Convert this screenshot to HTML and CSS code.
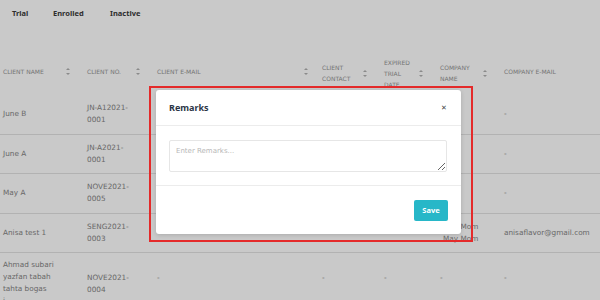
FILE: index.html
```html
<!DOCTYPE html>
<html>
<head>
<meta charset="utf-8">
<link rel="stylesheet" href="styles.css">
</head>
<body>
<div class="page">
  <nav class="tabs">
    <span class="tab">Trial</span>
    <span class="tab">Enrolled</span>
    <span class="tab">Inactive</span>
  </nav>
  <div class="table">
    <div class="row head">
      <div class="cell"><span>CLIENT NAME</span><i class="sort"></i></div>
      <div class="cell"><span>CLIENT NO.</span><i class="sort"></i></div>
      <div class="cell wide"><span>CLIENT E-MAIL</span><i class="sort"></i></div>
      <div class="cell"><span>CLIENT<br>CONTACT</span><i class="sort"></i></div>
      <div class="cell"><span>EXPIRED<br>TRIAL<br>DATE</span><i class="sort"></i></div>
      <div class="cell"><span>COMPANY<br>NAME</span><i class="sort"></i></div>
      <div class="cell"><span>COMPANY E-MAIL</span></div>
    </div>
    <div class="row">
      <div class="cell">June B</div>
      <div class="cell">JN-A12021-<br>0001</div>
      <div class="cell"></div><div class="cell"></div><div class="cell"></div><div class="cell"></div>
      <div class="cell">-</div>
    </div>
    <div class="row">
      <div class="cell">June A</div>
      <div class="cell">JN-A2021-<br>0001</div>
      <div class="cell"></div><div class="cell"></div><div class="cell"></div><div class="cell"></div>
      <div class="cell">-</div>
    </div>
    <div class="row">
      <div class="cell">May A</div>
      <div class="cell">NOVE2021-<br>0005</div>
      <div class="cell"></div><div class="cell"></div><div class="cell"></div><div class="cell"></div>
      <div class="cell">-</div>
    </div>
    <div class="row">
      <div class="cell">Anisa test 1</div>
      <div class="cell">SENG2021-<br>0003</div>
      <div class="cell"></div><div class="cell"></div><div class="cell"></div>
      <div class="cell shift">May Mom<br>May Mom</div>
      <div class="cell">anisaflavor@gmail.com</div>
    </div>
    <div class="row tall">
      <div class="cell">Ahmad subari<br>yazfan tabah<br>tahta bogas<br>i</div>
      <div class="cell mid">NOVE2021-<br>0004</div>
      <div class="cell mid">-</div><div class="cell mid">-</div><div class="cell mid">-</div><div class="cell mid">-</div>
      <div class="cell mid">-</div>
    </div>
  </div>
  <div class="overlay"></div>
  <div class="highlight"></div>
  <div class="modal">
    <div class="modal-head">
      <span class="modal-title">Remarks</span>
      <span class="close">&#x2715;</span>
    </div>
    <div class="modal-body">
      <textarea class="remarks" placeholder="Enter Remarks..."></textarea>
    </div>
    <div class="modal-foot">
      <button class="save">Save</button>
    </div>
  </div>
</div>
</body>
</html>
```

FILE: styles.css
```css
* { box-sizing: border-box; }
html, body { margin: 0; padding: 0; }
body {
  width: 600px;
  height: 300px;
  overflow: hidden;
  background: #fff;
  font-family: "Noto Sans", "Open Sans", sans-serif;
}
.page { position: relative; width: 600px; height: 300px; overflow: hidden; }
.tabs {
  display: flex;
  padding: 7px 0 0 12px;
  height: 51px;
}
.tab {
  font-size: 7.5px;
  font-weight: 700;
  color: #3a3a3a;
  line-height: 12px;
}
.tab:nth-child(1) { width: 41px; }
.tab:nth-child(2) { width: 57px; }
.table {
  display: flex;
  flex-direction: column;
  font-family: "DejaVu Sans", "Noto Sans", sans-serif;
}
.row {
  display: grid;
  grid-template-columns: 84px 70px 165px 62px 56px 64px 1fr;
  align-items: center;
  height: 39.5px;
  border-bottom: 1px solid #e2e2e2;
  font-size: 7.3px;
  line-height: 12px;
  color: #858585;
}
.row.head {
  height: 44px;
  border-bottom: none;
  font-size: 6px;
  line-height: 11px;
  color: #959595;
}
.row.head .cell:nth-child(1),
.row.head .cell:nth-child(2),
.row.head .cell:nth-child(3),
.row.head .cell:nth-child(7) { padding-bottom: 4px; }
.row.tall { height: 60px; align-items: start; }
.cell {
  padding-left: 3px;
  display: flex;
  align-items: center;
  justify-content: space-between;
  padding-right: 14px;
  white-space: nowrap;
}
.cell.wide { padding-right: 11px; }
.cell.shift { padding-left: 6px; }
.row.tall .cell { padding-top: 6px; }
.row.tall .cell.mid { padding-top: 19px; }
.sort {
  width: 4px;
  height: 7px;
  position: relative;
  display: inline-block;
}
.sort::before, .sort::after {
  content: "";
  position: absolute;
  left: 0;
  border-left: 2px solid transparent;
  border-right: 2px solid transparent;
}
.sort::before { top: 0; border-bottom: 2.5px solid #b0b0b0; }
.sort::after { bottom: 0; border-top: 2.5px solid #b0b0b0; }
.overlay {
  position: absolute;
  inset: 0;
  background: rgba(0, 0, 0, 0.21);
}
.highlight {
  position: absolute;
  left: 149px;
  top: 86px;
  width: 324px;
  height: 156px;
  border: 2px solid #e42a2a;
}
.modal {
  position: absolute;
  left: 156px;
  top: 90px;
  width: 305px;
  height: 144px;
  background: #fff;
  border-radius: 3px;
  box-shadow: 0 1px 4px rgba(0,0,0,0.15);
  display: flex;
  flex-direction: column;
}
.modal-head {
  height: 36px;
  display: flex;
  align-items: center;
  justify-content: space-between;
  padding: 0 14px 0 13px;
  border-bottom: 1px solid #ececec;
}
.modal-title {
  font-size: 9px;
  font-weight: 700;
  color: #2c3646;
}
.close { font-size: 7px; color: #444; }
.modal-body {
  padding: 14px 14px 13px 13px;
  border-bottom: 1px solid #ececec;
}
.remarks {
  display: block;
  width: 100%;
  height: 32px;
  border: 1px solid #e6e6e6;
  border-radius: 2px;
  padding: 6px 6px;
  font-family: "DejaVu Sans", sans-serif;
  font-size: 7px;
  color: #555;
  resize: vertical;
  outline: none;
}
.remarks::placeholder { color: #b8b8b8; }
.modal-foot {
  flex: 1;
  display: flex;
  justify-content: flex-end;
  align-items: center;
  padding: 0 13px;
}
.save {
  width: 34px;
  height: 21px;
  border: none;
  border-radius: 2px;
  background: #27b7c8;
  color: #fff;
  font-family: inherit;
  font-size: 7.5px;
  font-weight: 700;
  padding: 0;
}
```
